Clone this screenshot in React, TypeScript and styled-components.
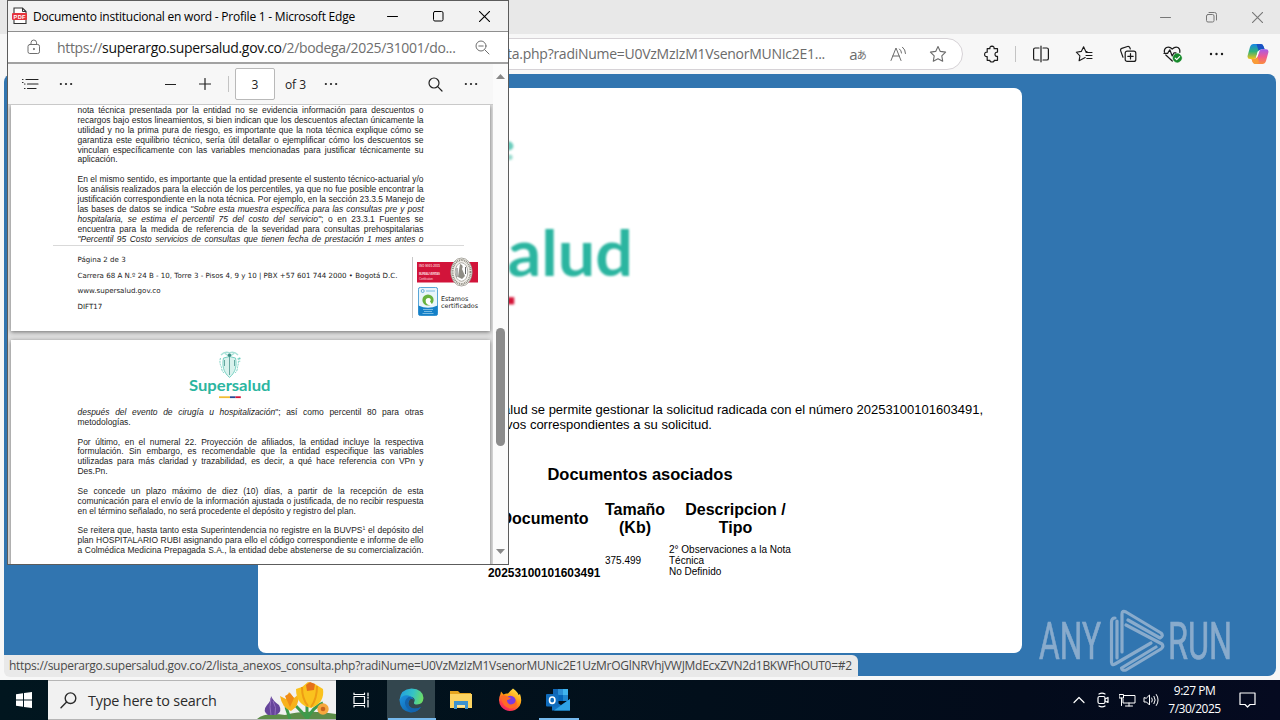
import React from "react";
import styled, { createGlobalStyle } from "styled-components";

const ui = `"Open Sans", "Noto Sans", sans-serif`;
const arial = `"Liberation Sans", Arial, sans-serif`;

const Global = createGlobalStyle`
  *{box-sizing:border-box}
  html,body{margin:0;padding:0;overflow:hidden}
  body{font-family:${ui};color:#111}
  p,h1,h2{margin:0}
  svg{display:block;flex:none}
`;

const Desktop = styled.div`
  position: relative; width: 1280px; height: 720px; overflow: hidden;
  display: flex; flex-direction: column;
`;

/* ---------- main browser ---------- */
const Browser = styled.section`
  height: 680px; background: #f7f7f7; display: flex; flex-direction: column;
`;
const BrowserTitle = styled.header`
  height: 34px; flex: none; background: #e8e8e8; display: flex; justify-content: flex-end; color: #777;
`;
const WindowButton = styled.div<{ $w?: number }>`
  width: ${(p) => p.$w ?? 46}px; height: 100%; display: flex; align-items: center; justify-content: center;
`;
const BrowserBar = styled.nav`
  height: 40px; flex: none; display: flex; align-items: center; color: #1b1b1b;
`;
const AddressPill = styled.div`
  width: 843px; height: 32px; margin-left: 120px; margin-right: 9px; padding-right: 4px;
  border: 1px solid #d6d2d6; border-radius: 16px; background: #fff; color: #6b6b6b;
  display: flex; align-items: center; justify-content: flex-end;
`;
const PillUrl = styled.span`
  font-size: 14px; line-height: 20px; letter-spacing: -0.27px; white-space: nowrap; margin-right: 13px;
`;
const BarButton = styled.div<{ $w: number }>`
  width: ${(p) => p.$w}px; height: 32px; display: flex; align-items: center; justify-content: center;
`;
const BarRule = styled.i<{ $gap?: number }>`
  width: 1px; height: 16px; background: #c4c4c4; margin: 0 ${(p) => p.$gap ?? 3}px;
`;
const Latin = styled.span`font-size: 15px; line-height: 18px;`;
const Kana = styled.span`font: 10px/18px "Noto Sans CJK JP", sans-serif; padding-top: 1px; margin-left: -1px;`;

const PageArea = styled.main`
  height: 602px; margin: 0 4px; background: #3175b0; border-radius: 8px; padding: 14px 254px 0;
`;
const Card = styled.article`
  height: 565px; background: #fff; border-radius: 8px; font-family: ${arial}; color: #000;
  display: flex; flex-direction: column; overflow: hidden;
`;
const BigLogo = styled.div`margin: 24px 0 0 49px; height: 200px; filter: blur(0.8px);`;
const Notice = styled.p`
  margin-top: 90px; width: 725px; font-size: 13px; line-height: 15px; white-space: nowrap; text-align: right;
`;
const NoticeSecond = styled.span`display: block; width: 454px;`;
const DocsHeading = styled.h2`
  margin-top: 32px; font-size: 16.5px; line-height: 20px; text-align: center; font-weight: 700;
`;
const DocsTable = styled.div`
  margin: 17px 0 0 230px; display: grid; grid-template-columns: 113px 60px 133px; column-gap: 4px;
`;
const HeadCell = styled.div`
  height: 36px; font-weight: 700; font-size: 16px; line-height: 18px; text-align: center;
  display: flex; align-items: center; justify-content: center;
`;
const Cell = styled.div<{ $top: number }>`
  padding-top: ${(p) => p.$top}px; font-size: 10px; line-height: 11px; white-space: nowrap;
`;
const Radicado = styled(Cell)`font-size: 11.9px; line-height: 14px; font-weight: 700;`;

const StatusBubble = styled.div`
  position: absolute; left: 4px; top: 655px; width: 854px; height: 22px; padding-left: 5px;
  background: #e9e9e9; border-radius: 0 6px 0 6px; color: #4a4a4a;
  font-size: 12px; line-height: 21px; letter-spacing: -0.285px; white-space: nowrap;
`;
const Watermark = styled.div`position: absolute; left: 1036px; top: 606px;`;

/* ---------- popup window ---------- */
const Popup = styled.section`
  position: absolute; left: 7px; top: 0; width: 502px; height: 565px; background: #fff;
  border: 1px solid #5c5c5c; display: flex; flex-direction: column;
`;
const PopupTitle = styled.header`
  height: 31px; flex: none; background: #f2f2f2; border-bottom: 1px solid #8f8f8f; padding: 0 1px 0 4px;
  display: flex; align-items: center; color: #000;
`;
const TitleText = styled.span`
  margin-left: 5px; flex: 1; font-size: 12px; letter-spacing: -0.23px; white-space: nowrap;
`;
const PopupAddress = styled.div`
  height: 32px; flex: none; border-bottom: 2px solid #a2a2a2; padding: 0 18px 0 19px;
  display: flex; align-items: center; color: #6e6e6e;
`;
const PopupUrl = styled.span`
  flex: 1; margin-left: 16px; font-size: 14px; letter-spacing: -0.335px; white-space: nowrap;
  b { font-weight: 400; color: #111; }
`;
const PopupBody = styled.div`flex: 1; min-height: 0; display: flex;`;
const Reader = styled.div`width: 485px; display: flex; flex-direction: column;`;
const ReaderBar = styled.div`
  height: 41px; flex: none; background: #f7f7f7; border-bottom: 1px solid #c9c9c9;
  display: flex; align-items: center; font-size: 12px; color: #222;
`;
const Tool = styled.div<{ $w: number }>`
  width: ${(p) => p.$w}px; height: 34px; display: flex; align-items: center; justify-content: center; white-space: nowrap;
`;
const PageInput = styled.div`
  width: 40px; height: 32px; border: 1px solid #b9b9b9; border-radius: 2px; background: #fff;
  display: flex; align-items: center; justify-content: center;
`;
const Spacer = styled.div`flex: 1;`;
const Viewport = styled.div`
  flex: 1; min-height: 0; overflow: hidden; background: #dedede; padding: 0 3px; display: flex; flex-direction: column; gap: 9px;
`;
const Sheet = styled.div<{ $h: number }>`
  height: ${(p) => p.$h}px; flex: none; background: #fff; box-shadow: 0 1px 4px rgba(0,0,0,.5);
  font-family: ${arial}; color: #1c1c1c;
`;
const Copy = styled.div<{ $lh: number; $top?: number }>`
  padding-top: ${(p) => p.$top ?? 0}px; margin-left: 66.5px; width: 346px;
  font-size: 8.47px; line-height: ${(p) => p.$lh}px;
`;
const Line = styled.div<{ $last?: boolean }>`
  white-space: nowrap; text-align: left; text-align-last: ${(p) => (p.$last ? "left" : "justify")};
  height: 1lh;
  sup { font-size: 5px; line-height: 0; vertical-align: 3px; }
`;
const FootRule = styled.div`height: 1px; margin: 1px 26px 0 42px; background: #d9d9d9;`;
const Foot = styled.div`display: flex; padding: 6px 0 0 66.5px;`;
const Contact = styled.div`
  width: 334.5px; font: 7.08px/15.4px "DejaVu Sans", sans-serif; white-space: nowrap; color: #222;
`;
const Seals = styled.div`
  margin-top: 5px; height: 61px; border-left: 1px solid #c8c8c8; padding-left: 4px; display: flex; flex-direction: column;
`;
const SealRow = styled.div`
  display: flex; gap: 3px; align-items: center; padding-left: 1px;
  font: 6.4px/7.500px "DejaVu Sans", sans-serif; color: #222;
`;
const SealText = styled.span`padding-top: 3px;`;
const SmallLogo = styled.div`padding: 10px 0 0 178px; height: 68px;`;
const Scroll = styled.div`
  width: 15px; padding-top: 10px; background: #fbfbfb; display: flex; flex-direction: column; align-items: center;
`;
const Thumb = styled.div`width: 9px; height: 118px; margin: 249px 0 103px; flex: none; border-radius: 5px; background: #8c8c8c;`;

/* ---------- taskbar ---------- */
const Taskbar = styled.footer`
  height: 40px; background: linear-gradient(90deg, #01161f, #020f1b 55%, #030b1b 80%, #050a20);
  display: flex; color: #fff;
`;
const Task = styled.div<{ $w?: number; $active?: boolean; $line?: number }>`
  width: ${(p) => p.$w ?? 49}px; height: 40px; display: flex; align-items: center; justify-content: center;
  background: ${(p) => (p.$active ? "linear-gradient(#33464e,#33464e) left/48px 100% no-repeat" : "none")};
  position: relative;
  &::after { content: ""; position: absolute; bottom: 0; height: 2px; width: ${(p) => p.$line ?? 0}px; background: #76b9ed; }
`;
const Search = styled.div`
  width: 288px; height: 40px; background: #f1f1f1; border: 1px solid #b5b5b5; border-width: 1px 0;
  display: flex; align-items: center; padding-left: 12px; color: #2b2b2b;
`;
const SearchText = styled.span`flex: 1; margin-left: 11px; font-size: 14.4px; letter-spacing: -0.2px; white-space: nowrap;`;
const Tray = styled.div`margin-left: auto; display: flex; align-items: center; padding-right: 4px;`;
const TrayItem = styled.div<{ $w: number }>`width: ${(p) => p.$w}px; display: flex; justify-content: center;`;
const Clock = styled.div`
  width: 62px; padding-left: 1px; font-size: 12px; line-height: 18px; letter-spacing: -0.5px; text-align: center; white-space: nowrap;
`;

type GlyphProps = { w?: number; h?: number; box?: string; sw?: number; children: React.ReactNode };
const Glyph = ({ w = 16, h = w, box, sw = 1, children }: GlyphProps) => (
  <svg width={w} height={h} viewBox={box ?? `0 0 ${w} ${h}`} fill="none" stroke="currentColor" strokeWidth={sw} strokeLinecap="round" strokeLinejoin="round">
    {children}
  </svg>
);
const Dots = ({ s = 15 }: { s?: number }) => (
  <svg width={s} height="4" viewBox="0 0 15 4" fill="currentColor">
    <circle cx="2" cy="2" r="1.2" /><circle cx="7.5" cy="2" r="1.2" /><circle cx="13" cy="2" r="1.2" />
  </svg>
);
const Cross = ({ s = 10 }: { s?: number }) => <Glyph w={s} box="0 0 10 10"><path d="M0 0L10 10M10 0L0 10" /></Glyph>;
const Minus = () => <Glyph w={11}><path d="M0.5 5.5H10.5" /></Glyph>;
const Star = ({ list }: { list?: boolean }) => (
  <Glyph w={18} h={18} sw={1.1}>
    {list ? (
      <><path d="M10.2 12.6L4.1 15.8L4.9 10.8L1.3 7.2L6.3 6.4L8.6 1.8L10.8 6.4L12 6.6" /><path d="M11 7.5H17M11 10.5H17M11.8 13.5H17" /></>
    ) : (
      <path d="M9 1.5L11.3 6.4L16.6 7.1L12.8 10.9L13.7 16.2L9 13.7L4.3 16.2L5.2 10.9L1.4 7.1L6.7 6.4Z" />
    )}
  </Glyph>
);

const Logo = ({ width }: { width: number }) => (
  <svg width={width} height={(width * 50) / 81} viewBox="0 0 81 50" overflow="visible">
    <g fill="none" stroke="#6ccdbd" strokeWidth=".9">
      <path d="M34.500 8C33 15 34 22 40.5 27.500C47 22 48 15 46.500 8Q40.5 5 34.500 8Z" fill="#d9f2ed" />
      <path d="M31.500 8Q30 13 32.500 17Q32.500 21 35 23M49 8Q50 13 48.500 17Q48.500 21 46 23" strokeDasharray="2 .8" />
      <path d="M32 5Q36 1 40.5 3Q45 1 49 5M36 3.5Q40.5 7 45 3.5" strokeWidth="1.5" opacity=".6" />
      <path d="M40.5 7V25M35.5 10V16M45.5 10V16" strokeWidth=".8" stroke="#4a938b" />
    </g>
    <circle cx="40.5" cy="5.3" r="1.7" fill="#3e8c84" />
    <circle cx="50.500" cy="8.500" r="1.1" fill="#6ccdbd" />
    <circle cx="50.700" cy="11.300" r=".7" fill="#9adccf" />
    <text x="0" y="41" fill="#2bb5a0" fontFamily="Lato, 'Open Sans', sans-serif" fontWeight="700" fontSize="15.6" textLength="81.5" lengthAdjust="spacingAndGlyphs">Supersalud</text>
    <path d="M30 46.300H41V48.1H30Z" fill="#f2bd35" />
    <path d="M41 46.300H46.5V48.1H41Z" fill="#264a93" />
    <path d="M46.5 46.300H51.800V48.1H46.5Z" fill="#d41438" />
  </svg>
);

const pageTwo: [React.ReactNode, boolean?][] = [
  ["nota técnica presentada por la entidad no se evidencia información para descuentos o"],
  ["recargos bajo estos lineamientos, si bien indican que los descuentos afectan únicamente la"],
  ["utilidad y no la prima pura de riesgo, es importante que la nota técnica explique cómo se"],
  ["garantiza este equilibrio técnico, sería útil detallar o ejemplificar cómo los descuentos se"],
  ["vinculan específicamente con las variables mencionadas para justificar técnicamente su"],
  ["aplicación.", true],
  [" ", true],
  ["En el mismo sentido, es importante que la entidad presente el sustento técnico-actuarial y/o"],
  ["los análisis realizados para la elección de los percentiles, ya que no fue posible encontrar la"],
  ["justificación correspondiente en la nota técnica. Por ejemplo, en la sección 23.3.5 Manejo de"],
  [<>las bases de datos se indica <em>"Sobre esta muestra específica para las consultas pre y post</em></>],
  [<><em>hospitalaria, se estima el percentil 75 del costo del servicio"</em>; o en 23.3.1 Fuentes se</>],
  ["encuentra para la medida de referencia de la severidad para consultas prehospitalarias"],
  [<em>"Percentil 95 Costo servicios de consultas que tienen fecha de prestación 1 mes antes o</em>],
];
const pageThree: [React.ReactNode, boolean?][] = [
  [<><em>después del evento de cirugía u hospitalización</em>"; así como percentil 80 para otras</>],
  ["metodologías.", true],
  [" ", true],
  ["Por último, en el numeral 22. Proyección de afiliados, la entidad incluye la respectiva"],
  ["formulación. Sin embargo, es recomendable que la entidad especifique las variables"],
  ["utilizadas para más claridad y trazabilidad, es decir, a qué hace referencia con VPn y"],
  ["Des.Pn.", true],
  [" ", true],
  ["Se concede un plazo máximo de diez (10) días, a partir de la recepción de esta"],
  ["comunicación para el envío de la información ajustada o justificada, de no recibir respuesta"],
  ["en el término señalado, no será procedente el depósito y registro del plan.", true],
  [" ", true],
  [<>Se reitera que, hasta tanto esta Superintendencia no registre en la BUVPS<sup>1</sup> el depósito del</>],
  ["plan HOSPITALARIO RUBI asignando para ello el código correspondiente e informe de ello"],
  ["a Colmédica Medicina Prepagada S.A., la entidad debe abstenerse de su comercialización."],
];
const Lines = ({ rows }: { rows: [React.ReactNode, boolean?][] }) => (
  <>{rows.map(([t, last], i) => <Line key={i} $last={last}>{t}</Line>)}</>
);

const IsoSeal = () => (
  <svg width="62" height="30" viewBox="0 0 62 30">
    <rect x="0" y="5" width="61" height="20.5" fill="#d2143a" />
    <g fill="#f9cdd5" fontFamily="Liberation Sans" fontSize="3" fontWeight="700">
      <text x="2" y="10.2" textLength="21">ISO 9001:2015</text>
      <text x="2" y="18.2" textLength="21">BUREAU VERITAS</text>
      <text x="2" y="22.9" textLength="14" fontWeight="400">Certification</text>
    </g>
    <ellipse cx="44.5" cy="15" rx="10.8" ry="14" fill="#f3f1ec" stroke="#77756b" strokeWidth=".6" />
    <ellipse cx="44.5" cy="15" rx="9" ry="12" fill="none" stroke="#8b897e" strokeWidth="2" strokeDasharray="1 .8" />
    <ellipse cx="44.5" cy="15" rx="6.3" ry="9.3" fill="#fff" stroke="#77756b" strokeWidth=".6" />
    <path d="M43 7Q47 8 45 12L48 19L45 22L41 20L42 13Z" fill="#8f8d85" />
    <path d="M40 11V20M48.5 10V17" stroke="#666" strokeWidth="1" />
  </svg>
);
const EnvSeal = () => (
  <svg width="20" height="29" viewBox="0 0 20 29">
    <rect x=".4" y=".4" width="19.2" height="28.2" rx="2" fill="#e9f5fb" stroke="#1b85c9" strokeWidth=".8" />
    <path d="M.4 18.5Q10 23 19.6 18.5V26.6Q19.6 28.6 17.6 28.6H2.4Q.4 28.6 .4 26.6Z" fill="#1580c8" />
    <circle cx="10" cy="13" r="5.6" fill="#67b23e" />
    <path d="M8 16Q6.500 11 11 11Q14 12 12 14.500L14.500 18Q10 19 8 16Z" fill="#fff" />
    <circle cx="4.7" cy="4" r="1.5" fill="none" stroke="#3591c8" strokeWidth=".7" />
    <path d="M8 4H17M5 22.5H15M6 24.5H14M4.5 26.5H15.5" stroke="#79bce2" strokeWidth="1" />
  </svg>
);

const Copilot = () => (
  <svg width="22" height="22" viewBox="0 0 22 22">
    <defs>
      <linearGradient id="cpA" x1="0" y1="0" x2="0" y2="1"><stop offset="0" stopColor="#1687e8" /><stop offset=".5" stopColor="#2fb27b" /><stop offset="1" stopColor="#f3c318" /></linearGradient>
      <linearGradient id="cpB" x1="0" y1="0" x2="0" y2="1"><stop offset="0" stopColor="#a45bea" /><stop offset=".5" stopColor="#ee5a92" /><stop offset="1" stopColor="#fb8d3c" /></linearGradient>
    </defs>
    <path d="M6.5 1H14Q16 1 16.8 4L17.6 6.3H14.5Q12 6.3 11 9L9 14.5Q8.3 16 6.5 16H3Q-.3 16 .8 12L3 4Q4 1 6.5 1Z" fill="url(#cpA)" />
    <path d="M9.5 1H14Q16 1 16.8 4L17.6 6.3H14.3Q12.3 6.3 11.6 8Z" fill="#1b52c4" />
    <path d="M15.5 21H8Q6 21 5.2 18L4.6 16H7.5Q9.7 16 10.7 13L12.6 7.8Q13.3 6.3 15 6.3H19Q22.3 6.3 21.2 10L19 18Q18 21 15.5 21Z" fill="url(#cpB)" />
    <path d="M4.6 16H7.5Q9.5 16 10.5 13.5L12 19.5L10 21H8Q6 21 5.2 18Z" fill="#f99c38" />
    <path d="M10.600 8.500L12 7.500L10.800 13L9 15Z" fill="#fff" />
  </svg>
);

const PdfIcon = () => (
  <svg width="16" height="18" viewBox="0 0 16 18">
    <path d="M2 1H10.5L14 4.5V16.5H2Z" fill="#fff" stroke="#333" strokeWidth="1.1" />
    <path d="M10.5 1V4.5H14" fill="none" stroke="#333" />
    <rect x="0" y="6" width="15" height="7" rx="1" fill="#e5343d" />
    <text x="1.5" y="11.6" fill="#fff" fontFamily="Liberation Sans" fontSize="5.6" fontWeight="700" textLength="12">PDF</text>
  </svg>
);

const Crocus = () => (
  <svg width="79" height="38" viewBox="0 0 79 38">
    <path d="M0 38Q8 31 28 34Q50 28 79 33V38Z" fill="#5c8d48" />
    <path d="M33 38L29 26M50 37Q44 30 39 25M50 38Q56 26 66 22M50 38V24" stroke="#3d9a4b" strokeWidth="3" fill="none" />
    <path d="M14 15Q16 20 22 24Q26 31 19 34H11Q5 30 10 24Q14 20 14 15Z" fill="#66459b" />
    <path d="M14 17Q12 26 14 34M16 20Q20 26 18 34" stroke="#9370bd" fill="none" />
    <path d="M23 15L29 18L32 11L37 17L42 13Q42 26 34 30Q25 27 23 15Z" fill="#f8b21c" />
    <path d="M28 15L33 12L37 17L33 26Z" fill="#ef8b16" />
    <path d="M39 8L45 6L51 1L58 3L66 8Q68 22 54 27Q39 24 39 8Z" fill="#fac21e" />
    <path d="M45 6Q45 18 51 25M60 5Q60 18 54 26" stroke="#ee9c14" strokeWidth="2" fill="none" />
    <path d="M49 4L53 1L58 3L57 9L50 10Z" fill="#e5711c" />
    <circle cx="66" cy="28" r="5.7" fill="#f6a83d" /><circle cx="66" cy="28" r="2.3" fill="#c8641e" />
  </svg>
);

const EdgeIcon = () => (
  <svg width="25" height="25" viewBox="0 0 25 25">
    <defs>
      <linearGradient id="eg" x1="0" x2="1" y1=".3" y2=".5"><stop offset="0" stopColor="#219fe0" /><stop offset=".55" stopColor="#36c3c4" /><stop offset="1" stopColor="#6ddd63" /></linearGradient>
      <linearGradient id="eb" x1="0" x2="1" y1="0" y2="1"><stop offset="0" stopColor="#1d93df" /><stop offset="1" stopColor="#0c59a4" /></linearGradient>
    </defs>
    <path d="M.5 12Q1.5 1 12.5.5Q24 1 24.5 10Q24 16.5 18 16.5Q14.5 16.5 15 14.5Q17 10.5 13 9Q7 7 .5 12Z" fill="url(#eg)" />
    <path d="M.5 12Q3 6.5 9.5 7.5Q14 8.5 15 12.5Q13 9.5 10.5 12Q8 16 11 19Q15 22.5 22 19Q18 25 11.5 24.4Q1 23 .5 12Z" fill="url(#eb)" />
    <path d="M9.5 9Q4.5 12 6.5 17.5Q9 23 15 23.9Q19.5 23 22 19Q15 22 11 19Q7.5 15.5 10.5 12Q12 10 14 11Q12.5 8.6 9.5 9Z" fill="#1464ad" />
  </svg>
);
const Explorer = () => (
  <svg width="22" height="20" viewBox="0 0 22 20">
    <path d="M0 1H8L10 3H21V6H0Z" fill="#e5a51f" /><path d="M0 4H22V18H0Z" fill="#fcd462" />
    <path d="M4 11H18V19H15V15H7V19H4Z" fill="#3d93cf" /><path d="M7 15H15V17H7Z" fill="#fae39a" />
  </svg>
);
const Firefox = () => (
  <svg width="24" height="24" viewBox="0 0 24 24">
    <defs><linearGradient id="ff" x1=".8" x2=".2" y1="0" y2="1"><stop offset="0" stopColor="#ffe74a" /><stop offset=".45" stopColor="#ff980e" /><stop offset=".8" stopColor="#ff3a4c" /><stop offset="1" stopColor="#e21878" /></linearGradient></defs>
    <path d="M15 .5Q20 4 20.5 7L22 6Q26 17 17 22Q9 25 3.5 19Q-1 13 2.5 6L3 3.5L5.5 6.5Q8 5 10 5.5Q12 3 15 .5Z" fill="url(#ff)" />
    <circle cx="12.5" cy="13" r="5.3" fill="#7a3be0" />
    <path d="M3 8Q7 6 10 9L13 10Q11 12 9 12Q9 16 13 16.5Q17 16 18 12Q21 19 13 20.5Q4 20 3 8Z" fill="#ff6a26" />
  </svg>
);
const Outlook = () => (
  <svg width="25" height="22" viewBox="0 0 25 22">
    <path d="M7 0H22V12H7Z" fill="#1066b5" /><path d="M12 0H22V6H12Z" fill="#2b8fd6" /><path d="M17 0H22V6H17Z" fill="#3fb4ee" />
    <path d="M12 6H17V12H12Z" fill="#0364b8" /><path d="M17 6H22V12H17Z" fill="#1f86cf" />
    <path d="M6 21.5V11L15 16L24 10V21.5Z" fill="#1173c4" /><path d="M24 10V21.5H8Z" fill="#2fa3e6" />
    <rect x="0" y="5" width="12.5" height="12.5" rx="1" fill="#0f6cbd" />
    <ellipse cx="6.2" cy="11.2" rx="2.7" ry="3.2" fill="none" stroke="#fff" strokeWidth="1.6" />
  </svg>
);

export default function App() {
  return (
    <Desktop>
      <Global />
      <Browser>
        <BrowserTitle>
          <WindowButton><Minus /></WindowButton>
          <WindowButton>
            <Glyph w={11}><rect x=".5" y="2.5" width="7.5" height="7.5" rx="1.5" /><path d="M3 .5H8.5Q10.5 .5 10.5 2.5V8" /></Glyph>
          </WindowButton>
          <WindowButton><Cross s={11} /></WindowButton>
        </BrowserTitle>
        <BrowserBar>
          <AddressPill>
            <PillUrl>/2/lista_anexos_consulta.php?radiNume=U0VzMzIzM1VsenorMUNIc2E1...</PillUrl>
            <BarButton $w={40}><Latin>a</Latin><Kana>あ</Kana></BarButton>
            <BarButton $w={40}>
              <Glyph w={17} h={16}><path d="M1 14.5L6 2L11 14.5M2.8 10H9.2M9.5 3Q11.5 4.5 11.5 7M12.5 1.2Q15.5 3.5 15.5 7.5" /></Glyph>
            </BarButton>
            <BarButton $w={40}><Star /></BarButton>
          </AddressPill>
          <BarButton $w={40}>
            <Glyph w={18} sw={1.2}><path d="M4.2 3.7H6.9Q6.5 1.3 9 1.2Q11.4 1.3 11.1 3.7H14.5V7.1Q12 7 12 9.3Q12 11.5 14.5 11.4V15.3H11.2Q11.4 17 9 17Q6.7 17 6.9 15.3H4.2V11.5Q1.6 11.8 1.6 9.4Q1.6 7 4.2 7.2Z" /></Glyph>
          </BarButton>
          <BarRule />
          <BarButton $w={43}>
            <Glyph w={18} sw={1.2}><path d="M7 3H3.2Q1.6 3 1.6 4.6V13.4Q1.6 15 3.2 15H7M11 3H14.8Q16.4 3 16.4 4.6V13.4Q16.4 15 14.8 15H11M9 1.2V16.8" /></Glyph>
          </BarButton>
          <BarButton $w={44}><Star list /></BarButton>
          <BarButton $w={44}>
            <Glyph w={18} sw={1.2}><rect x="6.2" y="6.2" width="10.6" height="10.2" rx="2" /><path d="M11.5 8.6V14M8.8 11.3H14.2M4 12.2L1.6 5.6Q1.2 4 2.8 3.4L8.5 1.5Q10.2 1.2 10.8 2.6L11.3 4" /></Glyph>
          </BarButton>
          <BarButton $w={45}>
            <Glyph w={20} h={18} sw={1.2}>
              <path d="M9.3 16L2.8 10M1.4 7.2Q.8 4 3.4 2.5Q6.6 1.2 9.2 4Q12.2 1.2 15 2.5Q17.4 4 16.8 7.4M1 8.4H4.6L6.8 4.8L9.2 11L11 7.8H13" />
              <circle cx="14.3" cy="13" r="4.4" fill="#178a2c" stroke="#178a2c" strokeWidth=".4" /><path d="M12.2 13.2L13.7 14.7L16.6 11.7" stroke="#fff" />
            </Glyph>
          </BarButton>
          <BarButton $w={42}><Dots /></BarButton>
          <BarButton $w={41}><Copilot /></BarButton>
        </BrowserBar>
        <PageArea>
          <Card>
            <BigLogo><Logo width={324} /></BigLogo>
            <Notice>
              La Supersalud se permite gestionar la solicitud radicada con el número 20253100101603491,
              <NoticeSecond>con los archivos correspondientes a su solicitud.</NoticeSecond>
            </Notice>
            <DocsHeading>Documentos asociados</DocsHeading>
            <DocsTable>
              <HeadCell>Documento</HeadCell>
              <HeadCell>Tamaño (Kb)</HeadCell>
              <HeadCell>Descripcion /<br />Tipo</HeadCell>
              <Radicado $top={29}>20253100101603491</Radicado>
              <Cell $top={18}>375.499</Cell>
              <Cell $top={7}>2° Observaciones a la Nota<br />Técnica<br />No Definido</Cell>
            </DocsTable>
          </Card>
        </PageArea>
      </Browser>

      <StatusBubble>https://superargo.supersalud.gov.co/2/lista_anexos_consulta.php?radiNume=U0VzMzIzM1VsenorMUNIc2E1UzMrOGlNRVhjVWJMdEcxZVN2d1BKWFhOUT0=#2</StatusBubble>

      <Watermark>
        <svg width="206" height="70" viewBox="0 0 206 70">
          <g fill="#9fb9d3" stroke="#9fb9d3" strokeWidth=".7" fontFamily="Roboto, sans-serif" fontSize="51" fontWeight="400" opacity=".8">
            <text x="3" y="53" textLength="62" lengthAdjust="spacingAndGlyphs">ANY</text>
            <text x="132" y="53" textLength="64" lengthAdjust="spacingAndGlyphs">RUN</text>
          </g>
          <g fill="none" stroke="#9fb9d3" strokeWidth="3.2" strokeLinejoin="round" strokeLinecap="round" opacity=".8">
            <path d="M79 12Q75.500 12 75.500 16V56Q76 60 79 58L115 37M81 15V52" />
            <path d="M86 46V8Q86 4 90 6L125 27Q128 30 124 32L92 14M90 19L126 38Q128 41 125 43L90 64Q86 65 85.500 62L120 41" />
          </g>
        </svg>
      </Watermark>

      <Popup>
        <PopupTitle>
          <PdfIcon />
          <TitleText>Documento institucional en word - Profile 1 - Microsoft Edge</TitleText>
          <WindowButton><Minus /></WindowButton>
          <WindowButton><Glyph w={11}><rect x=".5" y=".5" width="9.5" height="9.5" rx="1.4" /></Glyph></WindowButton>
          <WindowButton><Cross s={11} /></WindowButton>
        </PopupTitle>
        <PopupAddress>
          <Glyph w={14} h={16}><rect x="1" y="5.5" width="11.5" height="9" rx="1.8" /><path d="M4 5.500V3.800Q4.200 1 6.800 1Q9.400 1 9.600 3.800V5.500" /><circle cx="6.800" cy="10" r=".5" fill="currentColor" /></Glyph>
          <PopupUrl>https://<b>superargo.supersalud.gov.co</b>/2/bodega/2025/31001/do...</PopupUrl>
          <Glyph w={15}><circle cx="6" cy="6" r="5" /><path d="M9.700 9.700L14 14M3.800 6H8.200" /></Glyph>
        </PopupAddress>
        <PopupBody>
          <Reader>
            <ReaderBar>
              <Tool $w={44}><Glyph w={18} h={12} sw={1.2}><path d="M5 1.500H17M6.500 6H17M6.500 10.500H15M1.500 1.500H2M3.500 6H4M3.500 10.500H4M1.500 4.500H2" /></Glyph></Tool>
              <Tool $w={27}><Dots s={14} /></Tool>
              <Tool $w={73} />
              <Tool $w={36}><Glyph w={11} sw={1.2}><path d="M0.500 5.500H10.500" /></Glyph></Tool>
              <Tool $w={34}><Glyph w={12} sw={1.2}><path d="M0.500 6H11.500M6 .5V11.500" /></Glyph></Tool>
              <BarRule $gap={6} />
              <PageInput>3</PageInput>
              <Tool $w={41}>of 3</Tool>
              <Tool $w={30}><Dots s={14} /></Tool>
              <Spacer />
              <Tool $w={36}><Glyph w={15} sw={1.2}><circle cx="6" cy="6" r="5" /><path d="M9.700 9.700L14 14" /></Glyph></Tool>
              <Tool $w={36}><Dots s={14} /></Tool>
              <Tool $w={4} />
            </ReaderBar>
            <Viewport>
              <Sheet $h={226}>
                <Copy $lh={9.9} $top={1}><Lines rows={pageTwo} /></Copy>
                <FootRule />
                <Foot>
                  <Contact>
                    Página 2 de 3<br />
                    Carrera 68 A N.º 24 B - 10, Torre 3 - Pisos 4, 9 y 10 | PBX +57 601 744 2000 • Bogotá D.C.<br />
                    www.supersalud.gov.co<br />
                    DIFT17
                  </Contact>
                  <Seals>
                    <IsoSeal />
                    <SealRow><EnvSeal /><SealText>Estamos<br />certificados</SealText></SealRow>
                  </Seals>
                </Foot>
              </Sheet>
              <Sheet $h={600}>
                <SmallLogo><Logo width={81} /></SmallLogo>
                <Copy $lh={9.86}><Lines rows={pageThree} /></Copy>
              </Sheet>
            </Viewport>
          </Reader>
          <Scroll>
            <svg width="9" height="5" viewBox="0 0 9 5"><path d="M4.500 0L9 5H0Z" fill="#888" /></svg>
            <Thumb />
            <svg width="9" height="5" viewBox="0 0 9 5"><path d="M0 0H9L4.500 5Z" fill="#888" /></svg>
          </Scroll>
        </PopupBody>
      </Popup>

      <Taskbar>
        <Task $w={48}>
          <svg width="16" height="16" viewBox="0 0 16 16" fill="#fff"><path d="M0 2.300L7 1.300V7.500H0ZM8 1.100L16 0V7.500H8ZM0 8.500H7V14.700L0 13.700ZM8 8.500H16V16L8 14.900Z" /></svg>
        </Task>
        <Search>
          <Glyph w={17} sw={1.400}><circle cx="10.500" cy="6.200" r="5.300" /><path d="M6.600 10L1 15.800" /></Glyph>
          <SearchText>Type here to search</SearchText>
          <Crocus />
        </Search>
        <Task $w={51}>
          <Glyph w={17} h={16} sw={1.200}><path d="M1 1V2.500H11.500V1M1 15V13.500H11.500V15M1 4.500H11.500V11.500H1ZM15 1V4M15 8V15M14.500 5.800H15.500" /></Glyph>
        </Task>
        <Task $active $line={48}><EdgeIcon /></Task>
        <Task><Explorer /></Task>
        <Task><Firefox /></Task>
        <Task $line={40}><Outlook /></Task>
        <Tray>
          <TrayItem $w={24}><Glyph w={12} h={8} sw={1.200}><path d="M1 6.500L6 1.500L11 6.500" /></Glyph></TrayItem>
          <TrayItem $w={24}><Glyph w={12} h={16} sw={1.2}><rect x="1" y="4.500" width="7" height="7" rx="1.500" /><path d="M8 7L11 5.500V10.500L8 9M2 2Q5 .3 8 2M2 14Q5 15.700 8 14" /></Glyph></TrayItem>
          <TrayItem $w={24}><Glyph w={17} h={14}><path d="M5 2.500H16V10H4V6M.5 1.500H4.500V5H.5ZM2.500 5V12.500M10 10V13M6.500 13H13.500" /></Glyph></TrayItem>
          <TrayItem $w={24}><Glyph w={17} h={14}><path d="M1 5V9H3.500L6.500 12V2L3.500 5ZM8.800 5Q10 7 8.800 9M11 3.300Q13.500 7 11 10.700M13.300 1.500Q17 7 13.300 12.500" /></Glyph></TrayItem>
          <Clock>9:27 PM<br />7/30/2025</Clock>
          <TrayItem $w={44}><Glyph w={17} h={16} sw={1.200}><path d="M1 1H16V12.500H11L8.500 15L6 12.500H1Z" /></Glyph></TrayItem>
          <TrayItem $w={7}>{null}</TrayItem>
        </Tray>
      </Taskbar>
    </Desktop>
  );
}
